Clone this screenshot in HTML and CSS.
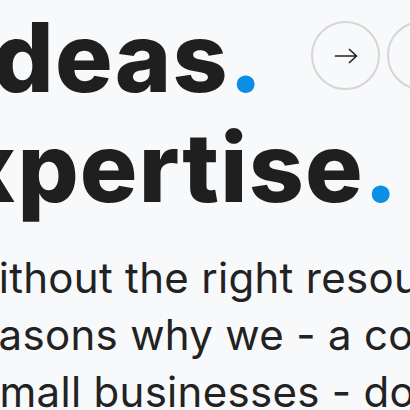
FILE: index.html
```html
<!DOCTYPE html>
<html lang="en">
<head>
<meta charset="utf-8">
<title>Ideas. Expertise.</title>
<link rel="stylesheet" href="styles.css">
</head>
<body>
<main class="page">
  <section class="hero">
    <h1 class="title">
      <span class="line line-1">ideas<span class="dot">.</span></span>
      <span class="line line-2">expertise<span class="dot">.</span></span>
    </h1>
    <div class="nav">
      <button class="circle" aria-label="Next">
        <svg width="24" height="24" viewBox="0 0 24 24" fill="none" stroke="#222" stroke-width="1.7" stroke-linecap="round" stroke-linejoin="round"><path d="M1.5 12h21M15.5 5.5l7 6.5-7 6.5"/></svg>
      </button>
      <button class="circle" aria-label="More">
        <svg width="24" height="24" viewBox="0 0 24 24" fill="none" stroke="#222" stroke-width="1.7" stroke-linecap="round" stroke-linejoin="round"><path d="M1.5 12h21M15.5 5.5l7 6.5-7 6.5"/></svg>
      </button>
    </div>
  </section>
  <p class="lead">
    <span class="row row-1">Without the right resources, it is hard</span>
    <span class="row row-2">reasons why we - a company of</span>
    <span class="row row-3">small businesses - don't</span>
  </p>
</main>
</body>
</html>
```
FILE: styles.css
```css
html, body {
  margin: 0;
  padding: 0;
}
body {
  background: #f8f9fb;
  color: #1f1f1f;
  font-family: "Inter", "Noto Sans", sans-serif;
  overflow: hidden;
}
.page {
  width: 456px;
}
.hero {
  display: grid;
}
.title,
.nav {
  grid-area: 1 / 1;
}
.title {
  margin: 0;
  padding-top: 2px;
  font-size: 96px;
  font-weight: 800;
  line-height: 110px;
  letter-spacing: 1.25px;
  color: #1f1f1f;
}
.line {
  display: block;
  white-space: nowrap;
}
.line-1 { text-indent: -36px; }
.line-2 { text-indent: -98px; }
.dot { color: #0b8fe6; }
.nav {
  justify-self: end;
  align-self: start;
  margin-top: 21px;
  display: flex;
  gap: 7px;
}
.circle {
  width: 69px;
  height: 69px;
  box-sizing: border-box;
  border: 2px solid #d6d6d6;
  border-radius: 50%;
  background: transparent;
  padding: 0;
  display: grid;
  place-items: center;
}
.lead {
  margin: 27px 0 0;
  font-size: 42px;
  font-weight: 400;
  line-height: 57px;
  letter-spacing: 0.3px;
  color: #222;
}
.row {
  display: block;
  white-space: nowrap;
}
.row-1 { text-indent: -43px; }
.row-2 { text-indent: -42px; }
.row-3 { text-indent: -23px; }
```
